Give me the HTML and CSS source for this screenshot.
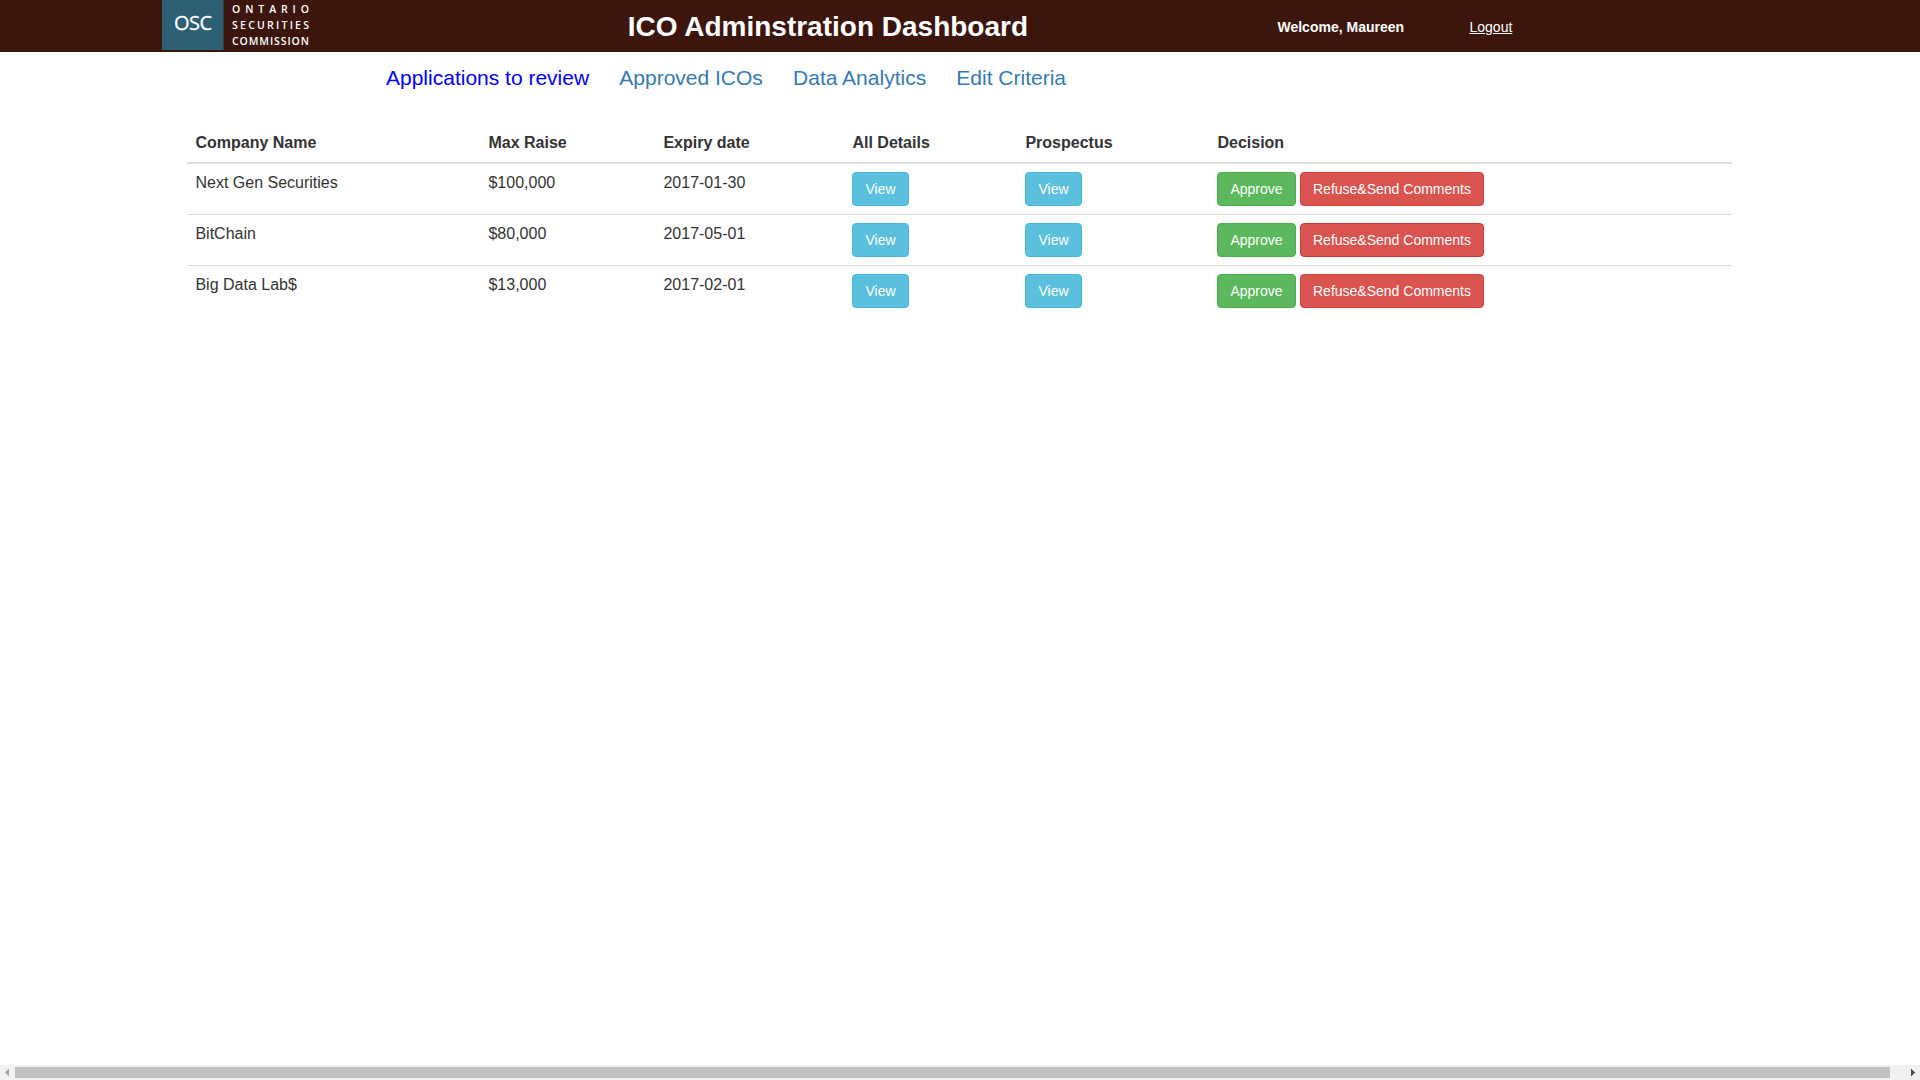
FILE: index.html
```html
<!DOCTYPE html>
<html lang="en">
<head>
<meta charset="utf-8">
<title>ICO Adminstration Dashboard</title>
<link rel="stylesheet" href="styles.css">
</head>
<body>
<header class="topbar">
  <svg class="logo" width="150" height="52" viewBox="0 0 150 52" role="img" aria-label="Ontario Securities Commission">
    <rect width="61.5" height="50" fill="#2d6075"/>
    <g fill="#fff">
      <text class="logo-mark" x="12" y="30" textLength="38">OSC</text>
      <text class="logo-line" x="70" y="12.5" textLength="77">ONTARIO</text>
      <text class="logo-line" x="70" y="28.5" textLength="77">SECURITIES</text>
      <text class="logo-line" x="70" y="44.5" textLength="77">COMMISSION</text>
    </g>
  </svg>
  <h1 class="title">ICO Adminstration Dashboard</h1>
  <span class="welcome">Welcome, Maureen</span>
  <a class="logout" href="#">Logout</a>
</header>
<nav class="tabs">
  <a class="tab tab-active" href="#">Applications to review</a>
  <a class="tab" href="#">Approved ICOs</a>
  <a class="tab" href="#">Data Analytics</a>
  <a class="tab" href="#">Edit Criteria</a>
</nav>
<main class="content">
  <table class="table">
    <colgroup><col class="c-name"><col class="c-raise"><col class="c-date"><col class="c-details"><col class="c-prospectus"><col></colgroup>
    <thead>
      <tr><th>Company Name</th><th>Max Raise</th><th>Expiry date</th><th>All Details</th><th>Prospectus</th><th>Decision</th></tr>
    </thead>
    <tbody>
      <tr>
        <td>Next Gen Securities</td><td>$100,000</td><td>2017-01-30</td>
        <td><button class="btn info">View</button></td>
        <td><button class="btn info">View</button></td>
        <td><div class="actions"><button class="btn success">Approve</button><button class="btn danger">Refuse&amp;Send Comments</button></div></td>
      </tr>
      <tr>
        <td>BitChain</td><td>$80,000</td><td>2017-05-01</td>
        <td><button class="btn info">View</button></td>
        <td><button class="btn info">View</button></td>
        <td><div class="actions"><button class="btn success">Approve</button><button class="btn danger">Refuse&amp;Send Comments</button></div></td>
      </tr>
      <tr>
        <td>Big Data Lab$</td><td>$13,000</td><td>2017-02-01</td>
        <td><button class="btn info">View</button></td>
        <td><button class="btn info">View</button></td>
        <td><div class="actions"><button class="btn success">Approve</button><button class="btn danger">Refuse&amp;Send Comments</button></div></td>
      </tr>
    </tbody>
  </table>
</main>
<div class="scrollbar">
  <svg width="15" height="15" shape-rendering="crispEdges"><path d="M9 4v7L5 7.5z" fill="#a3a3a3"/></svg>
  <div class="thumb"></div>
  <svg width="15" height="15" shape-rendering="crispEdges"><path d="M6 4v7l4-3.5z" fill="#505050"/></svg>
</div>
</body>
</html>
```

FILE: styles.css
```css
* { box-sizing: border-box; }
body {
  margin: 0;
  height: 100vh;
  display: flex;
  flex-direction: column;
  overflow: hidden;
  background: #fff;
  color: #333;
  font: 16px/22.86px "Liberation Sans", Arial, sans-serif;
}
.topbar {
  height: 52px;
  display: flex;
  align-items: center;
  padding-left: 162px;
  background: #3c150d;
  color: #fff;
}
.logo { display: block; width: 150px; flex: none; }
.logo-mark { font: 20px "Open Sans", sans-serif; stroke: #fff; stroke-width: .3px; }
.logo-line { font: 600 10.5px "Open Sans", sans-serif; }
.title {
  margin: 0 0 0 315.7px;
  width: 649.8px;
  padding-top: 2px;
  font-size: 28px;
  line-height: 30px;
  font-weight: 700;
}
.welcome { width: 192px; font-size: 14px; line-height: 20px; font-weight: 700; padding-top: 1px; }
.logout { color: #fff; font-size: 14px; line-height: 20px; padding-top: 1px; }
.tabs {
  display: flex;
  gap: 30.2px;
  height: 71px;
  padding: 11px 0 0 386px;
  font-size: 21px;
  line-height: 30px;
}
.tab { color: #337ab7; text-decoration: none; }
.tab-active { color: #00f; }
.content { flex: 1; padding: 0 188px 0 187px; }
.table { width: 100%; table-layout: fixed; border-collapse: separate; border-spacing: 0; }
.c-name { width: 293px; }
.c-raise { width: 175px; }
.c-date { width: 189px; }
.c-details { width: 173px; }
.c-prospectus { width: 192px; }
th, td { padding: 8px 8px 8px 8.45px; text-align: left; vertical-align: top; }
th { height: 41px; padding-top: 9px; padding-bottom: 7px; border-bottom: 2px solid #ddd; }
td { height: 50px; }
tr + tr td { height: 51px; border-top: 1px solid #ddd; }
.actions { display: flex; gap: 4.4px; }
.btn {
  display: block;
  height: 34px;
  padding: 6px 12px;
  border: 1px solid;
  border-radius: 4px;
  color: #fff;
  font: 14px/20px "Liberation Sans", Arial, sans-serif;
  white-space: nowrap;
}
.info { background: #5bc0de; border-color: #46b8da; }
.success { background: #5cb85c; border-color: #4cae4c; }
.danger { background: #d9534f; border-color: #d43f3a; }
.scrollbar { display: flex; align-items: center; height: 15px; background: #f1f1f1; }
.thumb { flex: 1; height: 11px; margin-right: 15px; background: #c1c1c1; }
```
